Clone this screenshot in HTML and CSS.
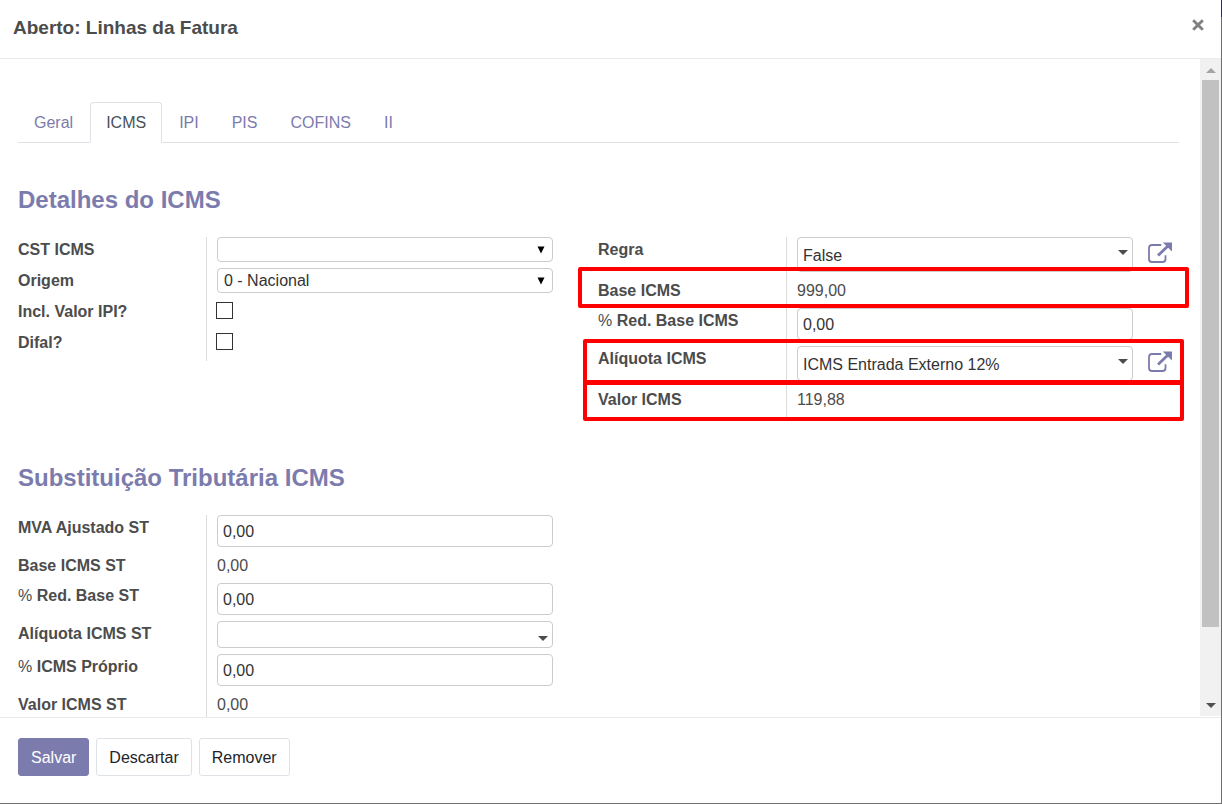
FILE: index.html
```html
<!DOCTYPE html>
<html lang="pt-BR">
<head>
<meta charset="utf-8">
<title>Aberto: Linhas da Fatura</title>
<link rel="stylesheet" href="styles.css">
</head>
<body>
<svg class="symbols" aria-hidden="true">
  <symbol id="external" viewBox="0 0 26 22">
    <path d="M14.2 3H5Q2 3 2 6v11q0 3 3 3h10.500q3 0 3-3v-3.800" fill="none" stroke="currentColor" stroke-width="1.800"/>
    <path d="M11 13.500 22 3" fill="none" stroke="currentColor" stroke-width="2.800"/>
    <path d="M15.800 0.600H25v9z" fill="currentColor"/>
  </symbol>
  <symbol id="caret" viewBox="0 0 10 5"><path d="M0 0h10L5 5z" fill="currentColor"/></symbol>
  <symbol id="arrow" viewBox="0 0 8 8"><path d="M0.500 0.500h7L4 7.500z" fill="currentColor"/></symbol>
</svg>
<div class="modal" role="dialog" aria-labelledby="title">
  <header class="modal-header">
    <h1 class="modal-title" id="title">Aberto: Linhas da Fatura</h1>
    <button class="close" type="button" aria-label="Fechar">
      <svg viewBox="0 0 10 10"><path d="M1 1l8 8M9 1L1 9" fill="none" stroke="currentColor" stroke-width="2.400"/></svg>
    </button>
  </header>

  <div class="modal-body">
    <main class="content">
      <nav class="tabs">
        <a class="tab" href="#geral">Geral</a>
        <a class="tab active" href="#icms">ICMS</a>
        <a class="tab" href="#ipi">IPI</a>
        <a class="tab" href="#pis">PIS</a>
        <a class="tab" href="#cofins">COFINS</a>
        <a class="tab" href="#ii">II</a>
      </nav>

      <section class="section">
        <h2 class="section-title">Detalhes do ICMS</h2>
        <div class="columns">
          <div class="group">
            <div class="row">
              <label class="label" for="cst">CST ICMS</label>
              <div class="value"><div class="control"><select class="select" id="cst"><option></option></select><svg class="select-arrow"><use href="#arrow"/></svg></div></div>
            </div>
            <div class="row">
              <label class="label" for="origem">Origem</label>
              <div class="value"><div class="control"><select class="select" id="origem"><option>0 - Nacional</option></select><svg class="select-arrow"><use href="#arrow"/></svg></div></div>
            </div>
            <div class="row">
              <label class="label" for="incl">Incl. Valor IPI?</label>
              <div class="value check-value"><input class="check" type="checkbox" id="incl"></div>
            </div>
            <div class="row">
              <label class="label" for="difal">Difal?</label>
              <div class="value check-value"><input class="check" type="checkbox" id="difal"></div>
            </div>
          </div>

          <div class="group">
            <div class="row">
              <label class="label" for="regra">Regra</label>
              <div class="value"><div class="control"><input class="input relation" type="text" id="regra" value="False"><svg class="caret"><use href="#caret"/></svg></div></div>
              <button class="open" type="button" aria-label="Abrir Regra"><svg><use href="#external"/></svg></button>
            </div>
            <div class="row">
              <span class="label">Base ICMS</span>
              <div class="value"><span class="readonly">999,00</span></div>
              <span class="mark mark-base"></span>
            </div>
            <div class="row">
              <label class="label" for="red"><span class="percent">%</span> Red. Base ICMS</label>
              <div class="value"><input class="input" type="text" id="red" value="0,00"></div>
            </div>
            <div class="row">
              <label class="label" for="aliq">Alíquota ICMS</label>
              <div class="value"><div class="control"><input class="input relation" type="text" id="aliq" value="ICMS Entrada Externo 12%"><svg class="caret"><use href="#caret"/></svg></div></div>
              <button class="open" type="button" aria-label="Abrir Alíquota ICMS"><svg><use href="#external"/></svg></button>
              <span class="mark mark-rate"></span>
            </div>
            <div class="row">
              <span class="label">Valor ICMS</span>
              <div class="value"><span class="readonly">119,88</span></div>
              <span class="mark mark-total"></span>
            </div>
          </div>
        </div>
      </section>

      <section class="section">
        <h2 class="section-title">Substituição Tributária ICMS</h2>
        <div class="columns">
          <div class="group">
            <div class="row">
              <label class="label" for="mva">MVA Ajustado ST</label>
              <div class="value"><input class="input" type="text" id="mva" value="0,00"></div>
            </div>
            <div class="row">
              <span class="label">Base ICMS ST</span>
              <div class="value"><span class="readonly">0,00</span></div>
            </div>
            <div class="row">
              <label class="label" for="redst"><span class="percent">%</span> Red. Base ST</label>
              <div class="value"><input class="input" type="text" id="redst" value="0,00"></div>
            </div>
            <div class="row">
              <label class="label" for="aliqst">Alíquota ICMS ST</label>
              <div class="value"><div class="control"><input class="input compact" type="text" id="aliqst"><svg class="caret"><use href="#caret"/></svg></div></div>
            </div>
            <div class="row">
              <label class="label" for="proprio"><span class="percent">%</span> ICMS Próprio</label>
              <div class="value"><input class="input" type="text" id="proprio" value="0,00"></div>
            </div>
            <div class="row">
              <span class="label">Valor ICMS ST</span>
              <div class="value"><span class="readonly">0,00</span></div>
            </div>
          </div>
        </div>
      </section>
    </main>

    <div class="scrollbar" aria-hidden="true">
      <span class="scroll-end scroll-up"><svg viewBox="0 0 10 5"><path d="M0 5h10L5 0z" fill="currentColor"/></svg></span>
      <span class="track"><span class="thumb"></span></span>
      <span class="scroll-end"><svg><use href="#caret"/></svg></span>
    </div>
  </div>

  <footer class="modal-footer">
    <button class="button primary" type="button">Salvar</button>
    <button class="button" type="button">Descartar</button>
    <button class="button" type="button">Remover</button>
  </footer>
</div>
</body>
</html>
```

FILE: styles.css
```css
* { box-sizing: border-box; }

body {
  margin: 0;
  padding: 0 1px 1px 0;
  height: 100vh;
  overflow: hidden;
  background: linear-gradient(#2a2d4d 17px, #6f6f6f 17px);
  color: #4c4c4c;
  font: 16px/24px "Liberation Sans", Arial, sans-serif;
}

button, input, select { font: inherit; margin: 0; }

.symbols { position: absolute; width: 0; height: 0; }

.modal {
  display: flex;
  flex-direction: column;
  height: 100%;
  background: #fff;
}

.modal-header {
  display: flex;
  align-items: center;
  justify-content: space-between;
  padding: 16px 17px 18px 13px;
  border-bottom: 1px solid #e9ecef;
}

.modal-title { margin: 0; font-size: 19px; line-height: 24px; }

.close {
  display: flex;
  padding: 0 0 6px;
  border: 0;
  background: none;
  color: #808080;
}
.close svg { width: 12px; height: 12px; }

.modal-body { display: flex; flex: 1; min-height: 0; }

.content {
  flex: 1;
  min-width: 0;
  overflow: hidden;
  padding: 43px 21px 0 18px;
}

.tabs { display: flex; gap: 1px; border-bottom: 1px solid #dee2e6; }
.tab {
  margin-bottom: -1px;
  padding: 8px 15px 7px;
  border: 1px solid transparent;
  border-radius: 4px 4px 0 0;
  color: #7c7bad;
  text-decoration: none;
}
.tab.active {
  border-color: #dee2e6 #dee2e6 #fff;
  background: #fff;
  color: #495057;
}

.section { padding-top: 42px; }
.section + .section { padding-top: 46px; }
.section-title {
  margin: 0 0 22px;
  color: #7c7bad;
  font-size: 24px;
  line-height: 30px;
}

.columns {
  display: grid;
  grid-template-columns: 1fr 1fr;
  align-items: start;
  margin-right: 1px;
}

.row {
  position: relative;
  display: grid;
  grid-template-columns: 188px 1fr 45px;
}
.label { font-weight: bold; line-height: 26px; }
.percent { font-weight: normal; }
.value {
  padding: 0 0 6px 10px;
  border-left: 1px solid #ddd;
}
.readonly { display: block; height: 24px; line-height: 26px; }

.control { position: relative; }
.input, .select {
  display: block;
  width: 100%;
  height: 32px;
  padding: 2px 5px 0;
  border: 1px solid #ccc;
  border-radius: 4px;
  background: #fff;
  color: #333;
}
.select { height: 25px; padding: 0 6px; appearance: none; }
.relation { height: 35px; }
.compact { height: 27px; }

.select-arrow {
  position: absolute;
  top: 9px;
  right: 8px;
  width: 8px;
  height: 8px;
  color: #000;
  pointer-events: none;
}
.caret {
  position: absolute;
  right: 5px;
  bottom: 7px;
  width: 10px;
  height: 5px;
}
.relation + .caret { bottom: 17px; }

.check-value { height: 31px; padding: 3px 0 0 9px; }
.check {
  display: block;
  width: 17px;
  height: 17px;
  border: 1px solid #333;
  background: #fff;
  appearance: none;
}

.open {
  justify-self: center;
  align-self: start;
  padding: 5px 0 0 8px;
  border: 0;
  background: none;
  color: #7c7bad;
}
.open svg { display: block; width: 26px; height: 22px; }

/* Highlight frames drawn over the rows */
.mark {
  position: absolute;
  border: 4px solid #f00;
  border-radius: 2px;
  pointer-events: none;
}
.mark-base { inset: -11px -11px 0 -20px; }
.mark-rate { inset: -7px -6px 3px -15px; }
.mark-total { inset: -6px -6px -4px -15px; }

.scrollbar {
  display: flex;
  flex-direction: column;
  width: 21px;
  margin-bottom: 1px;
  padding: 0 2px;
  background: #f1f1f1;
}
.scroll-end {
  display: flex;
  align-items: center;
  justify-content: center;
  height: 21px;
  color: #505050;
}
.scroll-up { padding-top: 2px; color: #a3a3a3; }
.scroll-end svg { width: 10px; height: 5px; }
.track { flex: 1; }
.thumb { display: block; height: 89%; background: #c1c1c1; }

.modal-footer {
  display: flex;
  gap: 7px;
  padding: 20px 18px 27px;
  border-top: 1px solid #e9ecef;
}
.button {
  height: 38px;
  padding: 2px 12px 0;
  border: 1px solid #dee2e6;
  border-radius: 3px;
  background: #fff;
  color: #212529;
}
.primary { border-color: #7c7bad; background: #7c7bad; color: #fff; }
```
